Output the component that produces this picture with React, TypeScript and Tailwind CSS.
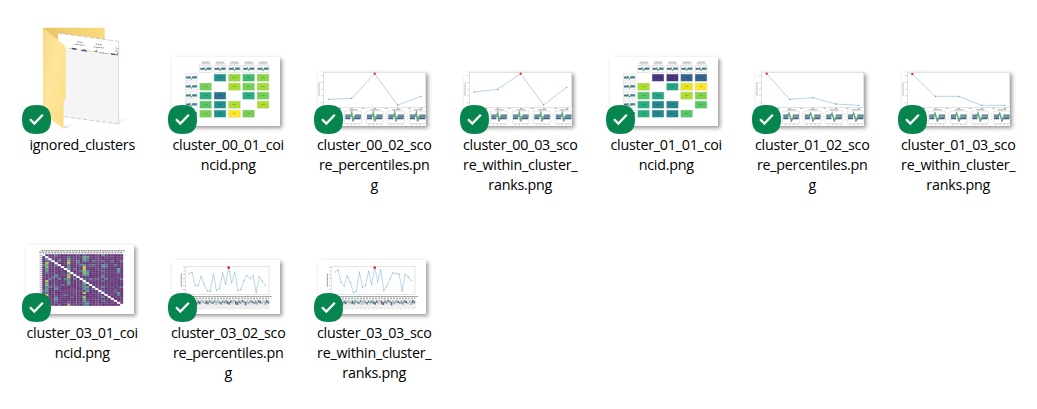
import type { ReactNode } from "react";

type Point = [number, number];

const COLS = [83, 126, 169, 212, 255];
const ROWS = [51, 78, 105, 132, 159];

function MiniWave({ x, y, w, h }: { x: number; y: number; w: number; h: number }) {
  const m = y + h / 2;
  return (
    <g>
      <rect x={x} y={y} width={w} height={h} fill="#fafafb" stroke="#cfcfd2" strokeWidth="1.5" />
      <rect x={x + 2} y={m - 3} width={w * 0.34} height="6" fill="#4f6f86" />
      <rect x={x + w * 0.58} y={m - 4} width={w * 0.38} height="7" fill="#47808a" />
      <path
        d={`M${x + w * 0.3} ${m}L${x + w * 0.4} ${m - h * 0.2}L${x + w * 0.5} ${m + h * 0.28}L${x + w * 0.64} ${m - 2}`}
        fill="none"
        stroke="#4b8c86"
        strokeWidth="2.600"
      />
    </g>
  );
}

function Matrix({ cells }: { cells: string[][] }) {
  return (
    <svg viewBox="0 0 324 207" className="block h-full w-full">
      {COLS.map((x, i) => (
        <g key={x}>
          <rect x={x + 7} y="14" width="23" height="3" fill="#aaa" />
          <rect x={x + 4} y="19" width="29" height="3" fill="#c4c4c4" />
          <MiniWave x={x} y={25} w={36} h={21} />
          <MiniWave x={40} y={ROWS[i]} w={36} h={21} />
        </g>
      ))}
      {cells.map((row, r) =>
        row.map((fill, c) =>
          fill ? (
            <g key={`${r}-${c}`}>
              <rect x={COLS[c]} y={ROWS[r]} width="36" height="22" fill={fill} stroke="#d5dcd8" strokeWidth="1.5" />
              <rect x={COLS[c] + 13} y={ROWS[r] + 10} width="10" height="2" fill="#222" opacity="0.35" />
            </g>
          ) : null,
        ),
      )}
    </svg>
  );
}

function BandWave({ x, early }: { x: number; early: boolean }) {
  const d = early
    ? `M${x + 13} 134L${x + 19} 124L${x + 26} 146L${x + 34} 134H${x + 46}`
    : `M${x + 17} 134L${x + 21} 123L${x + 25} 148L${x + 30} 132`;
  return (
    <g>
      <rect x={x} y="117" width="50" height="37" fill="#fff" stroke="#cfcfcf" strokeWidth="1.5" />
      <rect x={x + 13} y="112" width="26" height="3" fill="#aaa" />
      <path d={`M${x + 2} 129.500H${x + 17}M${x + 30} 129.500H${x + 49}`} stroke="#5a5f97" strokeWidth="4" />
      <path d={`M${x + 2} 134H${x + 17}M${x + 30} 134H${x + 49}`} stroke="#3f9a8a" strokeWidth="5" />
      <path d={`M${x + 2} 139H${x + 17}M${x + 27} 139H${x + 48}`} stroke="#4b5589" strokeWidth="5" />
      <path d={d} fill="none" stroke="#4b8f92" strokeWidth="4.500" />
      <path d={d} fill="none" stroke="#8fca63" strokeWidth="1.800" transform="translate(0 -1)" />
      <path d={`M${x + 6} 158H${x + 46}`} stroke="#aaa" strokeWidth="2" strokeDasharray="5 7" />
      <path d={`M${x - 6} 124v26`} stroke="#ccc" strokeWidth="3" strokeDasharray="3 6" />
    </g>
  );
}

function Trend({ points, peak, early = false }: { points: Point[]; peak: number; early?: boolean }) {
  return (
    <svg viewBox="0 0 324 162" className="block h-full w-full">
      <rect x="17" y="1" width="305" height="105" fill="none" stroke="#c6c6c6" strokeWidth="1.5" />
      <path d="M3 32v40" stroke="#aaa" strokeWidth="3" strokeDasharray="4 1" />
      <path d="M12 10v90" stroke="#bbb" strokeWidth="4" strokeDasharray="3 17" />
      <path d="M29 109.500H314" stroke="#aaa" strokeWidth="3" strokeDasharray="6 28.700" />
      <polyline points={points.map((p) => p.join(",")).join(" ")} fill="none" stroke="#8cbbdc" strokeWidth="1.900" />
      {points.map(([x, y]) => (
        <circle key={x} cx={x} cy={y} r="1.900" fill="#4f93c4" />
      ))}
      <rect x={points[peak][0] - 3} y={points[peak][1] - 3} width="6" height="6" fill="#f0201c" />
      {[15, 80, 145, 209, 274].map((x) => (
        <BandWave key={x} x={x} early={early} />
      ))}
    </svg>
  );
}

const WAVE_TONES = ["#5b6584", "#9aa8b2", "#4f8f93", "#77768a", "#a5b8b8", "#666a70", "#78a896"];

function LongTrend({ ys }: { ys: number[] }) {
  const pts: Point[] = ys.map((y, i) => [51 + i * 9.16, y]);
  return (
    <svg viewBox="0 0 324 162" className="block h-full w-full">
      <rect x="41" y="19" width="250" height="84" fill="none" stroke="#c9c9c9" strokeWidth="1.5" />
      <path d="M28 41v39" stroke="#888" strokeWidth="3" strokeDasharray="4 1" />
      <path d="M36 21v80" stroke="#aaa" strokeWidth="5" strokeDasharray="2 9" />
      <polyline points={pts.map((p) => p.join(",")).join(" ")} fill="none" stroke="#99c1de" strokeWidth="2" />
      {pts.map(([x, y]) => (
        <circle key={x} cx={x} cy={y} r="1.600" fill="#69a3cd" />
      ))}
      <circle cx="170" cy="23" r="4" fill="#ee2320" />
      <path d="M28 109.500H300" stroke="#999" strokeWidth="2.500" />
      <path d="M36 115H292" stroke="#b5b5b5" strokeWidth="5" strokeDasharray="6 3" />
      <rect x="36" y="118" width="256" height="19" fill="#e6e8ea" />
      {Array.from({ length: 52 }, (_, i) => (
        <rect
          key={i}
          x={37 + i * 4.9}
          y={120 + ((i * 7) % 5) * 1.5}
          width="4.6"
          height={5 + ((i * 5) % 6)}
          fill={WAVE_TONES[(i * 3 + (i % 4)) % 7]}
        />
      ))}
      <path d="M38 142H292" stroke="#c4c4c4" strokeWidth="7" strokeDasharray="2 4" />
      <path d="M38 147H292" stroke="#ddd" strokeWidth="3" strokeDasharray="3 5" />
    </svg>
  );
}

const HOT: Record<number, number> = { 1: 8, 4: 4, 8: 7, 13: 9, 14: 4, 19: 5, 21: 6, 24: 2 };
const HOT_TONES = ["#4f7797", "#5b9a99", "#5ba886", "#4b9596", "#93c35a", "#60b27b", "#c6cc45"];
const BASE_TONES = ["#65367a", "#6d3f7d", "#603878", "#69457f", "#633071"];

function denseTone(r: number, c: number) {
  const n = (r * 37 + c * 17 + r * c * 7) % 23;
  const heat = HOT[c] ?? 0;
  if (n < heat * 2) return HOT_TONES[(n + r) % (heat > 5 ? 7 : 4)];
  if ((r === 3 || r === 5 || r === 12) && n < 7) return "#5a7f95";
  if (n === 22) return "#5d6f97";
  return BASE_TONES[n % 5];
}

function DenseMatrix() {
  const cells: ReactNode[] = [];
  for (let r = 0; r < 26; r++) {
    for (let c = 0; c < 26; c++) {
      cells.push(
        <rect
          key={r * 26 + c}
          x={49 + c * 9.35}
          y={28 + r * 5.95}
          width={c === 3 || c === 10 || c === 17 ? 7.6 : 8.8}
          height="5.4"
          fill={r === c ? "#fff" : denseTone(r, c)}
        />,
      );
    }
  }
  return (
    <svg viewBox="0 0 324 207" className="block h-full w-full">
      <path d="M46 17H298" stroke="#777" strokeWidth="3" strokeDasharray="5 2" />
      <path d="M40 22.500H292" stroke="#a3a3a3" strokeWidth="6" strokeDasharray="6 3" />
      <path d="M44.500 29V182" stroke="#b6b9bd" strokeWidth="7" strokeDasharray="4 2" />
      <rect x="49" y="28" width="242" height="154.500" fill="#b09cba" />
      {cells}
      <path d="M51 29L289 181" stroke="#fff" strokeWidth="3" />
    </svg>
  );
}

function Folder() {
  return (
    <svg viewBox="0 0 330 340" className="absolute bottom-[-6px] left-[14.3px] block h-[113.3px] w-[110px]">
      <defs>
        <linearGradient id="flap" x1="0" y1="0" x2="1" y2="1">
          <stop offset="0" stopColor="#f7d987" />
          <stop offset="0.45" stopColor="#ffe59b" />
          <stop offset="1" stopColor="#fbdc80" />
        </linearGradient>
        <linearGradient id="back" x1="0" x2="1">
          <stop offset="0" stopColor="#e9c665" />
          <stop offset="1" stopColor="#fbdb7f" />
        </linearGradient>
        <linearGradient id="floor" x1="0" x2="1">
          <stop offset="0" stopColor="#999" stopOpacity="0.5" />
          <stop offset="1" stopColor="#ccc" stopOpacity="0" />
        </linearGradient>
      </defs>
      <path d="M123 323L158 312L126 329Z" fill="url(#floor)" />
      <path d="M240 305L322 298L286 315Z" fill="url(#floor)" />
      <path d="M60 26H242Q245 26 245 29V285H60Z" fill="url(#back)" />
      <path d="M106 43L287 67V315L106 291Z" fill="#f5f5f5" />
      <path d="M106 43L287 67V111L106 88Z" fill="#fff" />
      <path d="M287 67V315" stroke="#cfcfcf" strokeWidth="2" />
      <path d="M106 43L287 67M287 315L106 291" fill="none" stroke="#b5b5b5" strokeWidth="2" strokeDasharray="13 6" />
      <path d="M162 68l17 3M156 76l29 3M218 75l19 3M212 84l31 3M278 87l9 2M276 95l10 2" stroke="#888" strokeWidth="3" strokeDasharray="5 2" />
      <path d="M136 88L287 108" stroke="#d6d0a0" strokeWidth="3" strokeDasharray="10 3 5 2" />
      <path d="M146 86l14 2v5l-14-2zM174 94l12-3 8 7-19-2zM264 103l11 1 5 5-16-2z" fill="#68438a" />
      <path d="M213 98l10-7v9zM278 107l7-9v12z" fill="#6ab46e" />
      <path d="M186 95l9 2M229 101l25 3" stroke="#8c93ab" strokeWidth="3" strokeDasharray="6 3" />
      <path d="M60 27L124 78Q128 82 128 88V238L122 248V330L60 283Z" fill="url(#flap)" />
    </svg>
  );
}

function SyncBadge() {
  return (
    <svg viewBox="0 0 29 29" className="absolute bottom-[-8px] left-[13px] block size-[29px]">
      <path d="M14.500 0C24.500 0 29 4.500 29 14.500S24.500 29 14.500 29S0 24.500 0 14.500S4.500 0 14.500 0Z" fill="#06854e" />
      <path d="M8 14.300L12.300 18.500L20.800 9.800" fill="none" stroke="#fff" strokeWidth="2.300" />
    </svg>
  );
}

function Item({ lines, tall = false, children }: { lines: string[]; tall?: boolean; children?: ReactNode }) {
  return (
    <figure className="flex w-[146px] flex-col">
      <div className="relative flex h-[106px] items-end pl-[17px]">
        {children ? (
          <div
            className={`w-[108px] bg-white shadow-[2px_2px_4px_0px_rgba(0,0,0,0.42)] ${tall ? "h-[69px]" : "h-[54px]"}`}
          >
            {children}
          </div>
        ) : (
          <Folder />
        )}
        <SyncBadge />
      </div>
      <figcaption className="mt-[9px] flex flex-col items-center whitespace-pre pl-[0.5px] text-[14.3px] leading-[20px] tracking-[-0.24px] text-black">
        {lines.map((line) => (
          <span key={line}>{line}</span>
        ))}
      </figcaption>
    </figure>
  );
}

const Y = "#fde725";
const L = "#addc30";
const G = "#84d44b";
const M = "#56c667";
const E = "#28ae80";
const T = "#20928c";
const B = "#2d708e";

const MATRIX_00 = [
  ["", T, "#98d83e", "#3fbc73", "#8ad647"],
  ["#75d054", "", L, "#75d054", "#a2da37"],
  [E, B, "", E, "#75d054"],
  [M, T, L, "", L],
  ["#75d054", T, Y, "#75d054", ""],
];

const MATRIX_01 = [
  ["", "#453781", "#463480", "#33638d", "#33638d"],
  [L, "", "#21a585", "#e7e419", Y],
  [M, "#21a585", "", L, G],
  [E, "#25848e", "#25848e", "", M],
  [E, "#25848e", "#25848e", M, ""],
];

export default function App() {
  return (
    <main className="h-[409px] w-[1037px] overflow-hidden bg-white pl-[9px] pt-[20px] font-['Open_Sans','Noto_Sans',sans-serif]">
      <div className="grid grid-cols-[repeat(7,146px)] auto-rows-[188px]">
        <Item lines={["ignored_clusters"]} />
        <Item lines={["cluster_00_01_coi", "ncid.png"]} tall>
          <Matrix cells={MATRIX_00} />
        </Item>
        <Item lines={["cluster_00_02_sco", "re_percentiles.pn", "g"]}>
          <Trend points={[[32, 82], [101, 79], [170, 5], [239, 99], [309, 73]]} peak={2} />
        </Item>
        <Item lines={["cluster_00_03_sco", "re_within_cluster_", "ranks.png"]}>
          <Trend points={[[31, 60], [101, 52], [170, 5], [239, 99], [308, 46]]} peak={2} />
        </Item>
        <Item lines={["cluster_01_01_coi", "ncid.png"]} tall>
          <Matrix cells={MATRIX_01} />
        </Item>
        <Item lines={["cluster_01_02_sco", "re_percentiles.pn", "g"]}>
          <Trend points={[[32, 5], [101, 82], [170, 77], [239, 96], [308, 100]]} peak={0} early />
        </Item>
        <Item lines={["cluster_01_03_sco", "re_within_cluster_", "ranks.png"]}>
          <Trend points={[[31, 6], [100, 73], [170, 73], [239, 100], [308, 100]]} peak={0} early />
        </Item>
        <Item lines={["cluster_03_01_coi", "ncid.png"]} tall>
          <DenseMatrix />
        </Item>
        <Item lines={["cluster_03_02_sco", "re_percentiles.pn", "g"]}>
          <LongTrend
            ys={[41, 37, 77, 77, 49, 73, 93, 93, 43, 91, 85, 39, 73, 23, 68, 36, 92, 89, 61, 46, 56, 47, 97, 50, 63, 77]}
          />
        </Item>
        <Item lines={["cluster_03_03_sco", "re_within_cluster_", "ranks.png"]}>
          <LongTrend
            ys={[36, 30, 67, 78, 47, 66, 98, 94, 36, 83, 76, 34, 74, 23, 65, 30, 92, 78, 56, 38, 40, 42, 93, 43, 51, 62]}
          />
        </Item>
      </div>
    </main>
  );
}
